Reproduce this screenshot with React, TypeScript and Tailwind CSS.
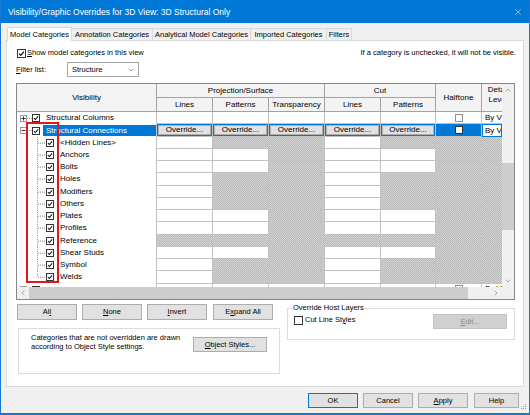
import React from 'react';
import { ChevronDown, ChevronLeft, ChevronRight, ChevronUp, X } from 'lucide-react';

const HATCH =
  'bg-[image:repeating-conic-gradient(#b9b9b9_0%_25%,#d3d3d3_0%_50%)] bg-[length:2px_2px]';
const COLS = 'grid-cols-[140px_56px_56px_56px_56px_55px_46px_20px]';
const LINE = 'border-[#c2c2c2]';
const HEAD = 'border-r border-b border-[#a3a3a3] flex items-center justify-center';

// L, P, T, cut L, cut P, halftone, detail  (w = editable, h = hatched)
const A = 'whhwhhh';
const B = 'wwhwwhh';
const C = 'hhhhhhh';

const children: [string, string][] = [
  ['<Hidden Lines>', A],
  ['Anchors', B],
  ['Bolts', B],
  ['Holes', A],
  ['Modifiers', A],
  ['Others', A],
  ['Plates', B],
  ['Profiles', B],
  ['Reference', C],
  ['Shear Studs', B],
  ['Symbol', A],
  ['Welds', A],
];

function Check({ on = true, big = false, light = false }: { on?: boolean; big?: boolean; light?: boolean }) {
  return (
    <span
      className={`inline-flex shrink-0 items-center justify-center bg-white border ${
        big ? 'w-[9px] h-[9px]' : 'w-[8px] h-[8px]'
      } ${light ? 'border-[#8f8f8f]' : 'border-[#333333]'}`}
    >
      {on && (
        <svg viewBox="0 0 8 8" className="w-full h-full">
          <path d="M1.3 4.1 L3.2 6 L6.8 1.8" fill="none" stroke="#111" strokeWidth="1.4" />
        </svg>
      )}
    </span>
  );
}

function Expander({ open }: { open: boolean }) {
  return (
    <svg width="7" height="7" viewBox="0 0 7 7" className="shrink-0">
      <rect x="0.5" y="0.5" width="6" height="6" fill="#fff" stroke="#9a9a9a" />
      <path d="M1.5 3.5h4" stroke="#333" />
      {!open && <path d="M3.5 1.5v4" stroke="#333" />}
    </svg>
  );
}

function Branch({ last }: { last: boolean }) {
  return (
    <svg viewBox="0 0 9 12" preserveAspectRatio="none" className="w-[9px] h-full shrink-0">
      <path d={last ? 'M0.5 0V6' : 'M0.5 0V12'} stroke="#9c9c9c" strokeDasharray="1 1" />
      <path d="M1 6H8" stroke="#9c9c9c" strokeDasharray="1 1" />
    </svg>
  );
}

function BodyRow({ vis, cells }: { vis: React.ReactNode; cells: React.ReactNode }) {
  return (
    <div className={`grid ${COLS} h-[12.26px] shrink-0 leading-none`}>
      <div className={`border-r ${LINE} bg-white flex items-center overflow-hidden whitespace-nowrap`}>{vis}</div>
      {cells}
    </div>
  );
}

function plainCells(kinds: string) {
  return kinds.split('').map((k, i) => (
    <div
      key={i}
      className={`border-b ${i < 6 ? 'border-r' : ''} ${LINE} ${k === 'h' ? HATCH : 'bg-white'}`}
    />
  ));
}

function topCells() {
  return [
    ...[0, 1, 2, 3, 4].map((i) => <div key={i} className={`border-b border-r ${LINE} bg-white`} />),
    <div key="h" className={`border-b border-r ${LINE} bg-white flex items-center justify-center`}>
      <Check on={false} light />
    </div>,
    <div key="d" className={`border-b ${LINE} bg-white flex items-center pl-[3px] overflow-hidden whitespace-nowrap`}>
      By View
    </div>,
  ];
}

function selCells() {
  return [
    ...[0, 1, 2, 3, 4].map((i) => (
      <div key={i} className={`border-b border-r ${LINE} bg-[#0078d7] p-[1px]`}>
        <div className="h-full bg-[#e1e1e1] border border-[#adadad] flex items-center justify-center">
          Override...
        </div>
      </div>
    )),
    <div key="h" className={`border-b border-r ${LINE} bg-[#0078d7] flex items-center justify-center`}>
      <Check on={false} />
    </div>,
    <div key="d" className="bg-white border border-[#0078d7] flex items-center pl-[2px] overflow-hidden whitespace-nowrap">
      By View
    </div>,
  ];
}

function TopVis({ label, open }: { label: string; open: boolean }) {
  return (
    <div className="flex items-center h-full pl-[3px]">
      <Expander open={open} />
      <span className="w-[5px] border-t border-dotted border-[#9c9c9c]" />
      <Check />
      <span className="ml-[6px]">{label}</span>
    </div>
  );
}

function Btn({ children, w, primary = false }: { children: React.ReactNode; w: string; primary?: boolean }) {
  return (
    <div
      className={`${w} h-[15px] shrink-0 bg-[#e1e1e1] border ${
        primary ? 'border-[#0078d7]' : 'border-[#adadad]'
      } flex items-center justify-center`}
    >
      {children}
    </div>
  );
}

export default function App() {
  return (
    <div className="w-[530px] h-[415px] flex flex-col bg-[#f0f0f0] border-x border-b-2 border-[#1c77d2] font-['Liberation_Sans',Arial,sans-serif] text-[7.5px] leading-[10px] text-black overflow-hidden">
      {/* title bar */}
      <div className="h-[23px] shrink-0 bg-[#0078d7] text-white flex items-center justify-between pl-[7px] pr-[6px] text-[8.5px]">
        <span>Visibility/Graphic Overrides for 3D View: 3D Structural Only</span>
        <X size={10} strokeWidth={1.2} />
      </div>

      <div className="px-[5px] flex flex-col">
        {/* tabs */}
        <div className="mt-[4px] h-[13px] flex items-end pl-[1px] relative z-10">
          <div className="w-[65px] h-[14px] -mb-px bg-white border border-b-0 border-[#d9d9d9] flex items-center justify-center">
            Model Categories
          </div>
          <div className="w-[81px] h-[12px] border border-b-0 border-l-0 border-[#d9d9d9] flex items-center justify-center">
            Annotation Categories
          </div>
          <div className="w-[98px] h-[12px] border border-b-0 border-l-0 border-[#d9d9d9] flex items-center justify-center">
            Analytical Model Categories
          </div>
          <div className="w-[76px] h-[12px] border border-b-0 border-l-0 border-[#d9d9d9] flex items-center justify-center">
            Imported Categories
          </div>
          <div className="w-[25px] h-[12px] border border-b-0 border-l-0 border-[#d9d9d9] flex items-center justify-center">
            Filters
          </div>
        </div>

        {/* panel */}
        <div className="h-[347px] bg-white border border-[#d9d9d9] flex flex-col">
          <div className="mt-[7px] h-[10px] flex items-center justify-between pl-[10px] pr-[7px]">
            <div className="flex items-center gap-[1px]">
              <Check big />
              <span>
                <span className="underline">S</span>how model categories in this view
              </span>
            </div>
            <span>If a category is unchecked, it will not be visible.</span>
          </div>

          <div className="mt-[4px] h-[15px] flex items-center pl-[9px]">
            <span className="w-[51px]">
              <span className="underline">F</span>ilter list:
            </span>
            <div className="w-[72px] h-[15px] border border-[#a6a6a6] flex items-center justify-between pl-[4px] pr-[3px]">
              <span>Structure</span>
              <ChevronDown size={8} strokeWidth={1.2} />
            </div>
          </div>

          {/* table */}
          <div className="mt-[6px] ml-[9px] w-[499px] h-[217px] shrink-0 border border-[#828790] flex flex-col relative text-[8px]">
            <div className="flex flex-1 min-h-0">
              <div className="w-[485px] flex flex-col overflow-hidden">
                <div className={`grid ${COLS} grid-rows-[14px_14px] bg-[#f3f3f3] shrink-0 leading-none`}>
                  <div className={`row-span-2 ${HEAD}`}>Visibility</div>
                  <div className={`col-span-3 ${HEAD}`}>Projection/Surface</div>
                  <div className={`col-span-2 ${HEAD}`}>Cut</div>
                  <div className={`row-span-2 ${HEAD}`}>Halftone</div>
                  <div className="row-span-2 border-b border-[#a3a3a3] overflow-hidden pt-[1px]">
                    <div className="w-[32px] text-center leading-[10px]">
                      Detail
                      <br />
                      Level
                    </div>
                  </div>
                  <div className={HEAD}>Lines</div>
                  <div className={HEAD}>Patterns</div>
                  <div className={HEAD}>Transparency</div>
                  <div className={HEAD}>Lines</div>
                  <div className={HEAD}>Patterns</div>
                </div>

                <div className="flex-1 flex flex-col overflow-hidden bg-white">
                  <BodyRow vis={<TopVis label="Structural Columns" open={false} />} cells={topCells()} />
                  <BodyRow
                    vis={
                      <div className="flex items-center h-full w-full pl-[3px]">
                        <Expander open />
                        <span className="w-[5px] border-t border-dotted border-[#9c9c9c]" />
                        <Check />
                        <span className="ml-[3px] flex-1 h-[11px] bg-[#0078d7] text-white pl-[3px] flex items-center">
                          Structural Connections
                        </span>
                      </div>
                    }
                    cells={selCells()}
                  />
                  {children.map(([name, kinds], i) => (
                    <BodyRow
                      key={name}
                      vis={
                        <div className="flex items-center h-full">
                          <span className="w-[20px] shrink-0" />
                          <Branch last={i === children.length - 1} />
                          <Check />
                          <span className="ml-[6px]">{name}</span>
                        </div>
                      }
                      cells={plainCells(kinds)}
                    />
                  ))}
                  <BodyRow vis={<TopVis label="Structural Fabric Areas" open={false} />} cells={topCells()} />
                </div>
              </div>

              {/* vertical scrollbar */}
              <div className="w-[12px] flex flex-col bg-[#f0f0f0] text-[#606060]">
                <div className="h-[12px] flex items-center justify-center">
                  <ChevronUp size={8} strokeWidth={1.5} />
                </div>
                <div className="h-[67px]" />
                <div className="h-[67px] bg-[#cdcdcd]" />
                <div className="flex-1" />
                <div className="h-[12px] flex items-center justify-center">
                  <ChevronDown size={8} strokeWidth={1.5} />
                </div>
              </div>
            </div>

            {/* horizontal scrollbar */}
            <div className="h-[12px] shrink-0 flex bg-[#f0f0f0] text-[#606060]">
              <div className="w-[12px] flex items-center justify-center">
                <ChevronLeft size={8} strokeWidth={1.5} />
              </div>
              <div className="w-[439px] bg-[#cdcdcd]" />
              <div className="flex-1" />
              <div className="w-[12px] flex items-center justify-center">
                <ChevronRight size={8} strokeWidth={1.5} />
              </div>
              <div className="w-[12px]" />
            </div>

            {/* red highlight annotation */}
            <div className="absolute left-[9px] top-[38px] w-[33px] h-[161px] border-2 border-[#e2161c] z-10 pointer-events-none" />
          </div>

          {/* lower controls */}
          <div className="flex">
            <div className="ml-[10px] w-[263px] flex flex-col">
              <div className="mt-[4px] flex gap-[5px]">
                <div className="w-[60px] h-[16px] bg-[#e1e1e1] border border-[#adadad] flex items-center justify-center">
                  <span>
                    Al<span className="underline">l</span>
                  </span>
                </div>
                <div className="w-[60px] h-[16px] bg-[#e1e1e1] border border-[#adadad] flex items-center justify-center">
                  <span>
                    <span className="underline">N</span>one
                  </span>
                </div>
                <div className="w-[60px] h-[16px] bg-[#e1e1e1] border border-[#adadad] flex items-center justify-center">
                  <span>
                    <span className="underline">I</span>nvert
                  </span>
                </div>
                <div className="w-[60px] h-[16px] ml-[1px] bg-[#e1e1e1] border border-[#adadad] flex items-center justify-center">
                  <span>
                    E<span className="underline">x</span>pand All
                  </span>
                </div>
              </div>
              <div className="mt-[8px] ml-[1px] w-[262px] h-[46px] bg-white border border-[#dcdcdc] flex items-start pt-[4px] pl-[12px] pr-[12px]">
                <div className="leading-[9px]">
                  Categories that are not overridden are drawn
                  <br />
                  according to Object Style settings.
                </div>
                <div className="ml-auto mt-[4px] w-[74px] h-[15px] bg-[#e1e1e1] border border-[#adadad] flex items-center justify-center">
                  <span>
                    <span className="underline">O</span>bject Styles...
                  </span>
                </div>
              </div>
            </div>

            <fieldset className="ml-[7px] mt-[3px] w-[228px] h-[37px] border border-[#dcdcdc] px-[6px]">
              <legend className="ml-[-2px] px-[1px] leading-[10px]">Override Host Layers</legend>
              <div className="flex items-start justify-between">
                <div className="mt-[2px] flex items-center gap-[2px]">
                  <Check big on={false} />
                  <span>
                    Cut Line St<span className="underline">y</span>les
                  </span>
                </div>
                <div className="mt-[1px] mr-[1px] w-[74px] h-[15px] bg-[#d0d0d0] border border-[#c4c4c4] text-[#8d8d8d] flex items-center justify-center">
                  <span>
                    <span className="underline">E</span>dit...
                  </span>
                </div>
              </div>
            </fieldset>
          </div>
        </div>
      </div>

      {/* dialog buttons */}
      <div className="mt-[6px] flex items-start justify-end pr-[2px]">
        <Btn w="w-[50px]" primary>
          OK
        </Btn>
        <div className="ml-[5px]">
          <Btn w="w-[50px]">Cancel</Btn>
        </div>
        <div className="ml-[5px]">
          <Btn w="w-[50px]">
            <span>
              <span className="underline">A</span>pply
            </span>
          </Btn>
        </div>
        <div className="ml-[6px]">
          <Btn w="w-[45px]">Help</Btn>
        </div>
        <svg width="6" height="6" viewBox="0 0 6 6" className="ml-[2px] mt-[11px]">
          <rect x="4" y="0" width="1" height="1" fill="#9a9a9a" />
          <rect x="2" y="2" width="1" height="1" fill="#9a9a9a" />
          <rect x="4" y="2" width="1" height="1" fill="#9a9a9a" />
          <rect x="0" y="4" width="1" height="1" fill="#9a9a9a" />
          <rect x="2" y="4" width="1" height="1" fill="#9a9a9a" />
          <rect x="4" y="4" width="1" height="1" fill="#9a9a9a" />
        </svg>
      </div>
    </div>
  );
}
